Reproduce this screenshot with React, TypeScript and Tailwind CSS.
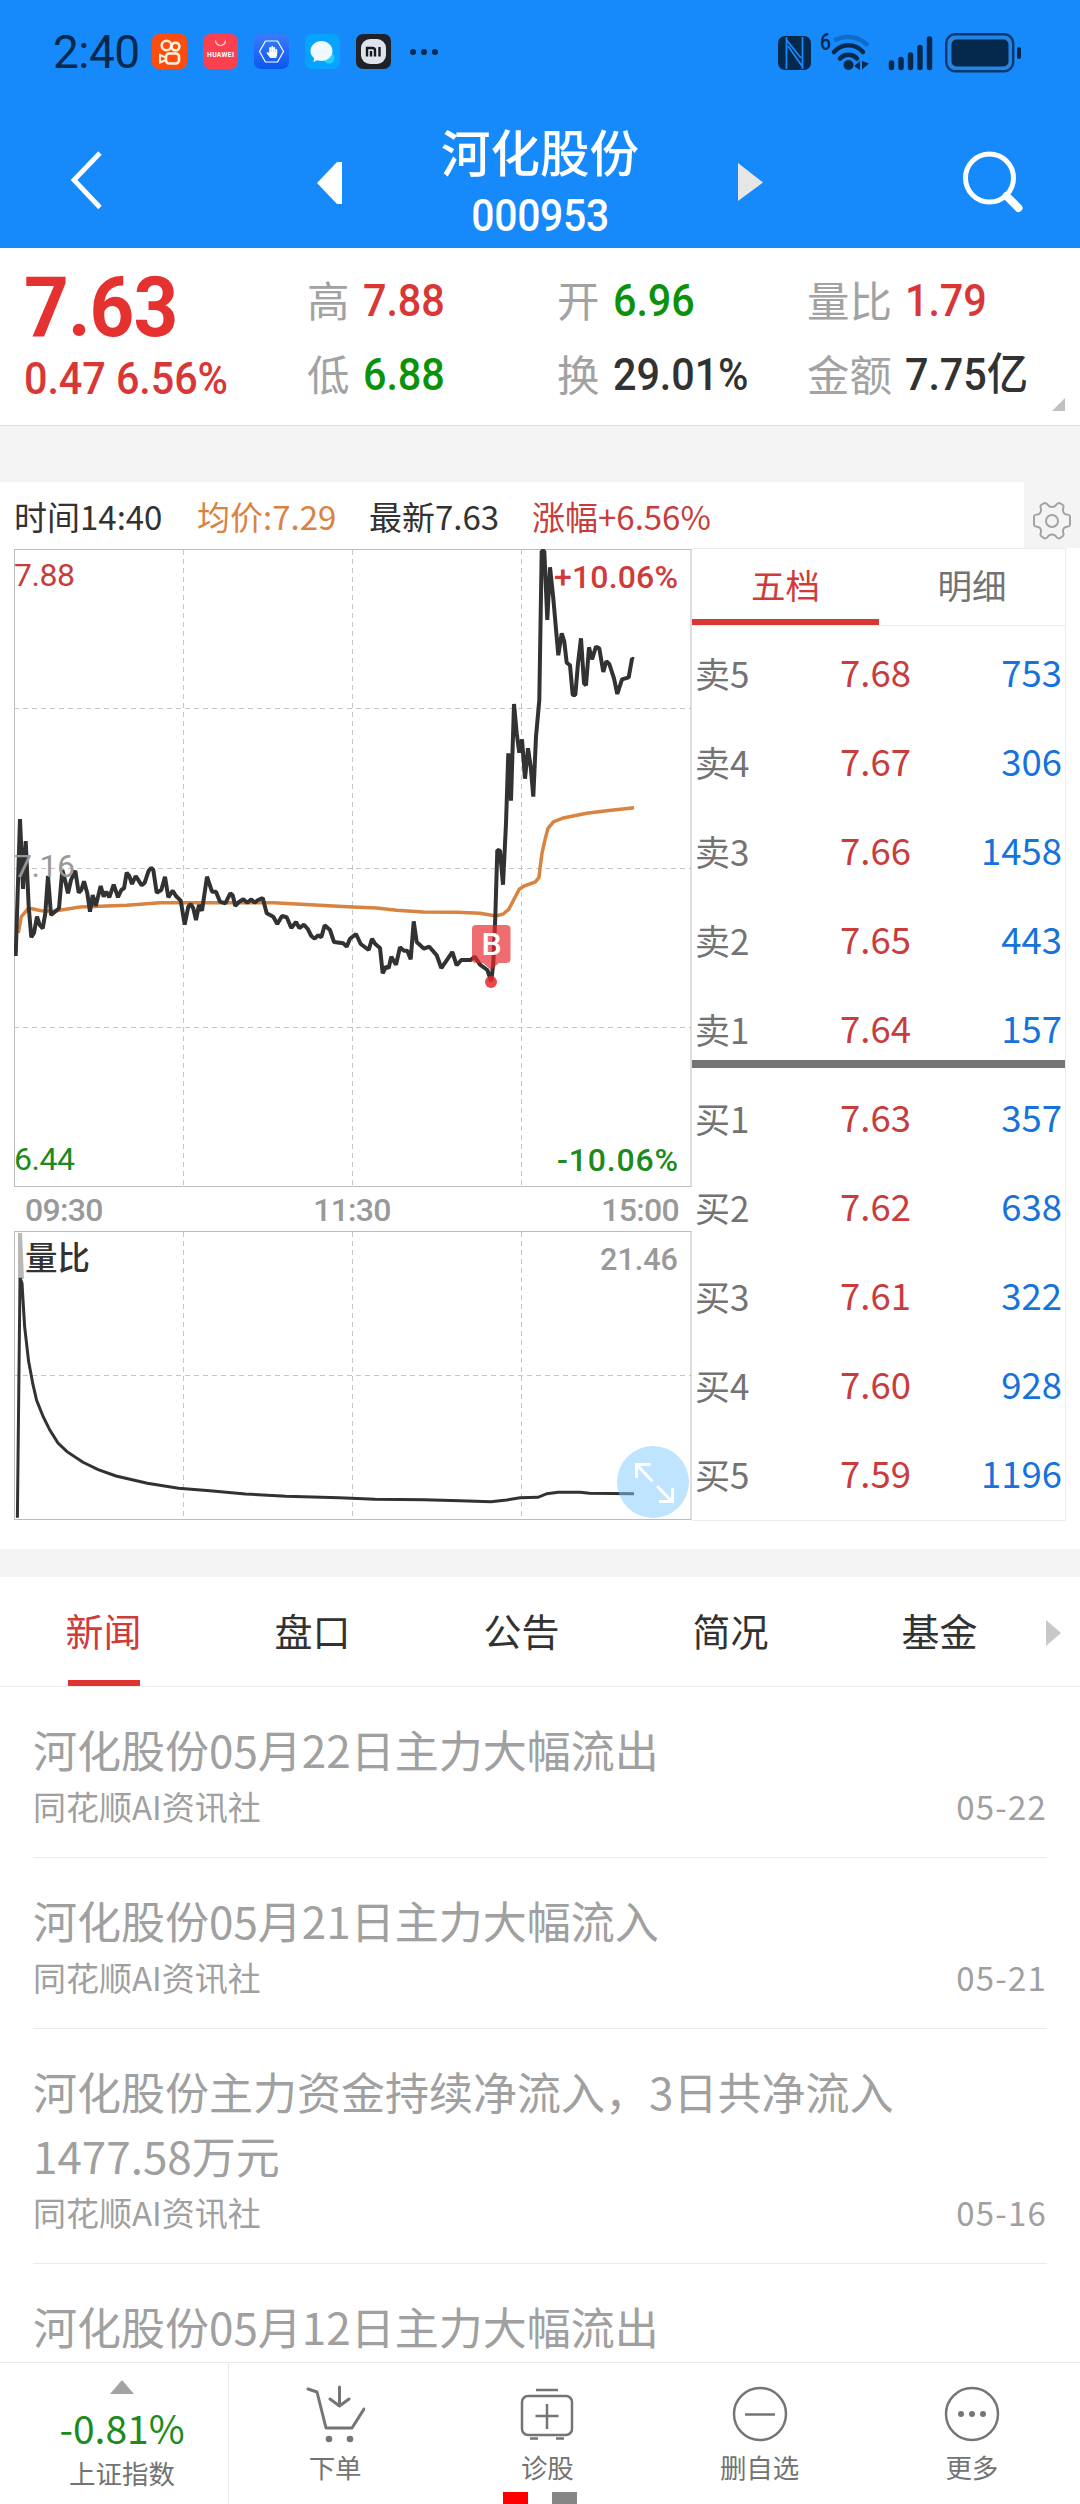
import { FaHandPaper } from "react-icons/fa";

const quotes = [
  [
    { label: "高", value: "7.88", color: "text-[#d93636]" },
    { label: "低", value: "6.88", color: "text-[#0a930a]" },
  ],
  [
    { label: "开", value: "6.96", color: "text-[#0a930a]" },
    { label: "换", value: "29.01%", color: "text-[#323232]" },
  ],
  [
    { label: "量比", value: "1.79", color: "text-[#d93636]" },
    { label: "金额", value: "7.75亿", color: "text-[#323232]" },
  ],
];

const asks = [
  { label: "卖5", price: "7.68", volume: "753" },
  { label: "卖4", price: "7.67", volume: "306" },
  { label: "卖3", price: "7.66", volume: "1458" },
  { label: "卖2", price: "7.65", volume: "443" },
  { label: "卖1", price: "7.64", volume: "157" },
];

const bids = [
  { label: "买1", price: "7.63", volume: "357" },
  { label: "买2", price: "7.62", volume: "638" },
  { label: "买3", price: "7.61", volume: "322" },
  { label: "买4", price: "7.60", volume: "928" },
  { label: "买5", price: "7.59", volume: "1196" },
];

const tabs = ["新闻", "盘口", "公告", "简况", "基金"];

const news = [
  {
    title: "河化股份05月22日主力大幅流出",
    source: "同花顺AI资讯社",
    date: "05-22",
  },
  {
    title: "河化股份05月21日主力大幅流入",
    source: "同花顺AI资讯社",
    date: "05-21",
  },
  {
    title: "河化股份主力资金持续净流入，3日共净流入1477.58万元",
    source: "同花顺AI资讯社",
    date: "05-16",
  },
  { title: "河化股份05月12日主力大幅流出" },
];

const pricePoints =
  "1.7,407 6,270 9,340 11.7,292 14.7,357.7 17.3,388.3 20,384 23,367.7 25.7,376 28.7,379.3 31.3,364.3 34,327 37,366 41,362.7 45,359.3 48.3,321 51,331 54,344.3 57,331 61.3,321.7 64.7,343.7 67.3,341 70,332.3 73.3,344.3 76,362.7 78.7,346 81.7,357 86.7,337 89.7,347.7 92.3,342.7 95.3,348.3 99.7,335.7 104,348.3 107.3,341 110,339.3 112.7,323.7 115.3,327 118,335 121.7,327 124.7,331.7 127.7,336.3 130.7,333.7 134.7,321.7 137.3,319 139.3,321 142.7,343.7 147.3,341 151,327.7 154.3,348.3 158.7,341.7 162,347 166.7,351.7 170.7,375.7 174.3,357.7 176.7,355 179.3,359.3 182,371 185,356 188,361.7 193,327.7 198,342.7 202,342.7 206,352.7 211.3,354.3 216.3,344.3 218.7,346.3 221.3,357 225.3,352.7 229.3,350.3 233.3,353.7 237.3,350.3 240.7,353.7 244,351 248.7,349 252.7,364.3 259.3,367.7 263.3,375 268,367 272.7,368.3 277.3,379 282,373 285.3,379 290,375.7 294,380.3 297.3,387 300.7,389.7 304,386.3 307.3,388.3 310.7,376.3 316,381 320,393 329.3,394.3 332.7,397.7 336,389.7 342,385 346.7,395 354.7,401 358,389.7 361.3,395 366,399 368.7,424.3 372,417.7 374.7,419 377.3,407.7 382,415.7 386,398.3 390,401.7 393.3,401.7 396.7,410.3 399.7,372.3 402.7,393 410,399.7 415.3,397.7 422.7,406.3 427.3,419 432,412.3 438.3,403 442.7,416.3 447.3,411 456.7,411 460.7,407.7 466,415.7 473.3,421 477.3,432.3 479.3,414.3 481.3,367.7 483.3,301 486,301.7 489,335.7 492,274.3 494.3,204.3 497,251.7 500,155 502.7,184.3 505.3,203.7 508,190.3 511,229.7 514,199.3 516.7,217.7 519.3,247.7 522,187.7 525.3,151 527.7,2 530.3,2 533.3,71 536,18.3 539.3,49.3 544.3,106.3 547.7,84.3 550.3,92.7 552.7,113.7 556,116.3 558.7,146 561.3,146 564,114.3 567,89.3 570,134.3 572,136.3 575,98.3 578,110.3 582,97.7 585.3,99.3 589.3,123 592.3,112.3 595.3,115 600,129.3 603.3,145 608,130.3 614.7,128.3 618,109.7 620,110.3";

const averagePoints =
  "4.3,384 7.3,367.7 14.7,359 27.3,361.7 39.3,362.3 66,358 112.7,356.3 146,353.7 259.3,353.7 319.3,357 338.7,358 362.7,359 382.7,361.3 409.3,363 442.7,363.3 466,364.3 482,367 489.3,365 494.7,360.3 500,350.3 505.3,340.3 510,337 521.3,333 525,328.3 526,319.3 528,304.3 531.3,289.3 534,279.3 539.3,273 549.3,269 572.7,264.3 592.7,261.7 620,258.7";

const volumePoints =
  "3.4,286.7 6,47 8,52 10.6,95.3 14.6,130.3 19,153.7 22.6,169.3 29.3,186 36,199.3 44,212 53,220.7 69,231.3 84.2,238.7 102,245 133.3,252.3 164.6,257.3 195.8,259.7 231.5,263 271.7,265.3 325.3,266.7 361,268.3 410,268.7 445.8,269.7 477,270.7 492.7,269 506,266.7 524,266.3 532.9,262.7 544,261.3 566.4,261.3 575.3,262.3 620,262.7";

function StatusBar() {
  return (
    <div className="flex h-[103px] items-center justify-between pl-[53px] pr-[59px]">
      <div className="flex items-center text-[#04294d]">
        <span className="w-[99px] font-[Roboto] text-[46px] leading-none tracking-[-0.5px]">
          2:40
        </span>
        <div className="flex items-center gap-4">
          <svg width="35" height="35" viewBox="0 0 35 35">
            <rect width="35" height="35" rx="7" fill="#fc4c0e" />
            <g fill="none" stroke="#fff1dc" strokeWidth="2.6">
              <circle cx="14.5" cy="11.5" r="4.8" />
              <circle cx="23.5" cy="12.5" r="3.9" />
              <rect x="14" y="19.5" width="13" height="10" rx="3.2" />
              <path d="M14 23.5l-6-2.5v7.5l6-2.5z" strokeWidth="2" />
            </g>
          </svg>
          <svg width="35" height="35" viewBox="0 0 35 35">
            <rect width="35" height="35" rx="7" fill="#fb4150" />
            <path
              d="M12.5 6.5a5 5 0 0 0 10 0"
              fill="none"
              stroke="#ffd9dc"
              strokeWidth="1.2"
            />
            <text
              x="17.5"
              y="23.2"
              textAnchor="middle"
              textLength="27"
              fontSize="6.8"
              fontWeight="700"
              fill="#fff"
              fontFamily="Roboto, sans-serif"
            >
              HUAWEI
            </text>
          </svg>
          <span className="relative flex size-[35px] items-center justify-center rounded-[7px] bg-linear-to-b from-[#3a7bff] to-[#0757ee]">
            <svg
              width="35"
              height="35"
              viewBox="0 0 35 35"
              className="absolute inset-0"
            >
              <path
                d="M11.5 7h12l6 10.5-6 10.5h-12l-6-10.5z"
                fill="none"
                stroke="#fff"
                strokeWidth="1.2"
                strokeLinejoin="round"
              />
            </svg>
            <FaHandPaper className="relative size-[12px] text-white" />
          </span>
          <svg width="35" height="35" viewBox="0 0 35 35">
            <rect width="35" height="35" rx="7" fill="#06a3ff" />
            <circle cx="24" cy="24" r="5.5" fill="#25cdfb" />
            <path
              d="M16.5 7c6 0 11 4.5 11 10s-5 10-11 10c-1.500 0-3-.2-4.200-.7L8.500 28l.5-4C6.800 22.300 5.500 20 5.500 17c0-5.500 5-10 11-10z"
              fill="#eff9ff"
            />
          </svg>
          <svg width="35" height="35" viewBox="0 0 35 35">
            <rect width="35" height="35" rx="7" fill="#1f2329" />
            <rect x="5" y="5" width="25" height="25" rx="9" fill="#dfe3ee" />
            <path
              d="M11 22.5v-8.500h5.500a2.500 2.500 0 0 1 2.500 2.500v6M15 17v5.500M23.500 13v9.500"
              fill="none"
              stroke="#15181d"
              strokeWidth="2.4"
            />
          </svg>
        </div>
        <div className="ml-[19px] flex gap-[5px]">
          <i className="size-[6px] rounded-full bg-[#04294d]" />
          <i className="size-[6px] rounded-full bg-[#04294d]" />
          <i className="size-[6px] rounded-full bg-[#04294d]" />
        </div>
      </div>
      <svg width="243" height="52" viewBox="0 -6 243 52">
        <rect x="0" y="4" width="33" height="34" rx="7" fill="#04294d" />
        <path
          d="M8.500 5v32M8.500 8l14.500 18M10 14l14 20M24.500 37V5"
          fill="none"
          stroke="#178afb"
          strokeWidth="1.8"
        />
        <text
          x="42"
          y="18"
          fontSize="23"
          fontWeight="500"
          textLength="11"
          lengthAdjust="spacingAndGlyphs"
          fill="#04294d"
          fontFamily="Roboto, sans-serif"
        >
          6
        </text>
        <g fill="none" strokeLinecap="round">
          <path
            d="M56 8.500c11-6 25-4.500 34 5"
            stroke="#0f6dca"
            strokeWidth="4.5"
            strokeLinecap="butt"
          />
          <path
            d="M56 20c8-9 21-9 29 0M62 26.500c4.500-5 12.500-5 17 0"
            stroke="#04294d"
            strokeWidth="4.5"
          />
        </g>
        <circle cx="70.5" cy="33" r="5" fill="#04294d" />
        <path d="M76 34l6-5v9zM84 29l7 2.500-7 6z" fill="#04294d" />
        <path
          d="M113.500 31v4.500M123 27.500v8M132.500 23v12.500M142 15.500v20M151.500 7v28.500"
          stroke="#04294d"
          strokeWidth="5.5"
          strokeLinecap="round"
        />
        <rect
          x="168.2"
          y="2.2"
          width="67"
          height="37"
          rx="9"
          fill="#2485e4"
          stroke="#04396f"
          strokeWidth="2.4"
        />
        <rect x="173.5" y="7.5" width="57" height="27" rx="5" fill="#04294d" />
        <rect x="239" y="15" width="4" height="12" rx="2" fill="#04294d" />
      </svg>
    </div>
  );
}

function TitleBar() {
  return (
    <div className="flex h-[145px] items-start justify-between pl-[70px] pr-[56px] text-white">
      <svg width="47" height="60" viewBox="0 0 47 60" className="mt-[47px]">
        <path
          d="M30 3L4 30 30 57.500"
          fill="none"
          stroke="#fff"
          strokeWidth="4.8"
        />
      </svg>
      <div className="flex w-[446px] items-start justify-between">
        <svg width="25" height="42" className="mt-[59px]">
          <path d="M0 21L20 0h5v42h-5z" fill="#fff" />
        </svg>
        <div className="flex flex-col items-center">
          <div className="mt-[16px] text-[49.5px] font-medium leading-[64px]">
            河化股份
          </div>
          <div className="mt-[9px] scale-x-[0.93] font-[Roboto] text-[44px] font-medium leading-[48px] tracking-[-0.3px]">
            000953
          </div>
        </div>
        <svg width="25" height="40" className="mt-[59px]">
          <path d="M0 1l25 19.500L0 39z" fill="#e6e6e6" />
        </svg>
      </div>
      <svg width="61" height="62" viewBox="0 0 61 62" className="mt-[48px]">
        <circle
          cx="26.5"
          cy="27"
          r="24"
          fill="none"
          stroke="#fff"
          strokeWidth="5"
        />
        <path
          d="M43.500 45l12 12"
          stroke="#fff"
          strokeWidth="8"
          strokeLinecap="round"
        />
      </svg>
    </div>
  );
}

function QuotePanel() {
  return (
    <section className="relative flex h-[178px] border-b border-[#dedede] bg-white">
      <div className="w-[307px] pl-6 font-[Roboto] text-[#e5312f]">
        <div className="w-fit origin-left scale-x-[0.93] pt-[22px] text-[84px] font-bold leading-[76px] tracking-[-1px]">
          7.63
        </div>
        <div className="mt-px w-fit origin-left scale-x-[0.93] whitespace-nowrap text-[44.5px] font-medium leading-[64px] tracking-[-0.1px] text-[#d93636]">
          0.47 6.56%
        </div>
      </div>
      <div className="flex flex-1">
        {quotes.map((column) => (
          <div key={column[0].label} className="w-[250px] shrink-0 pt-[16px]">
            {column.map((item) => (
              <div
                key={item.label}
                className="flex h-[74px] items-center gap-[13px] whitespace-nowrap text-[42.5px] leading-none"
              >
                <span className="-mt-1 text-[#a2a2a2]">{item.label}</span>
                <span
                  className={`origin-left scale-x-[0.93] font-[Roboto,'Noto_Sans_CJK_SC'] text-[44.5px] font-medium tracking-[-0.1px] ${item.color}`}
                >
                  {item.value}
                </span>
              </div>
            ))}
          </div>
        ))}
      </div>
      <svg
        width="13"
        height="13"
        className="absolute bottom-[14px] right-[15px]"
      >
        <path d="M13 0v13H0z" fill="#c0c0c0" />
      </svg>
    </section>
  );
}

function InfoRow() {
  return (
    <div className="flex h-[66px]">
      <div className="flex w-[1024px] items-center bg-white pl-[14px] pt-[3px] text-[33px] leading-none text-[#323232]">
        <span className="w-[183px]">时间14:40</span>
        <span className="w-[172px] text-[#d98341]">均价:7.29</span>
        <span className="w-[163px]">最新7.63</span>
        <span className="text-[#c83c3c]">涨幅+6.56%</span>
      </div>
      <div className="flex flex-1 items-center justify-center">
        <svg
          width="40"
          height="40"
          viewBox="0 0 40 40"
          fill="none"
          stroke="#a3a3a3"
          strokeWidth="2"
          strokeLinejoin="round"
          className="mt-[11px]"
        >
          <path d="M12.500 2q2 0 3 1.500Q17 6 20 6t4.500-2.500Q25.500 2 27.500 2l3.500 2q1 1.500 0 4-.5 5 4 5.500 2.500.2 3 1.500v9q-.5 1.500-3 1.700-4.500.6-4 5.300 1 2.500 0 4l-3.500 2.500q-2 0-3-1.500Q23 33.500 20 33.500T15.500 36q-1 1.500-3 1.500L9 35q-1-1.500 0-4 .5-4.700-4-5.300Q2.500 25.500 2 24v-9q.5-1.300 3-1.500Q9.500 13 9 8q-1-2.500 0-4z" />
          <circle cx="20" cy="20" r="6" />
        </svg>
      </div>
    </div>
  );
}

function PriceChart() {
  return (
    <svg
      width="678"
      height="638"
      viewBox="0 0 678 638"
      fontSize="32"
      className="block font-[Roboto]"
    >
      <rect
        x="0.5"
        y="0.5"
        width="676.5"
        height="637"
        fill="none"
        stroke="#bdbdbd"
      />
      <g stroke="#c6c6c6" strokeDasharray="5 4">
        <path d="M169.500 1v637M338.500 1v637M507.500 1v637" />
        <path d="M0 159.500h677M0 319.500h677M0 478.500h677" />
      </g>
      <polyline
        points={averagePoints}
        fill="none"
        stroke="#d98341"
        strokeWidth="3.5"
      />
      <polyline
        points={pricePoints}
        fill="none"
        stroke="#323232"
        strokeWidth="4"
        strokeLinejoin="bevel"
      />
      <g letterSpacing="-0.5">
        <text x="0" y="37" fill="#c83c3c">
          7.88
        </text>
        <text x="0" y="328" fill="#999">
          7.16
        </text>
        <text x="0" y="621" fill="#1c8a1c">
          6.44
        </text>
      </g>
      <g fontWeight="500">
        <text x="540" y="39" fill="#d03a3a" textLength="124">
          +10.06%
        </text>
        <text x="543" y="622" fill="#1c8a1c" textLength="121">
          -10.06%
        </text>
      </g>
      <g fill="#e8282d" fillOpacity="0.68">
        <path d="M462 376h30.500a4 4 0 0 1 4 4v30a4 4 0 0 1-4 4H485l-8 7-8-7h-7a4 4 0 0 1-4-4v-30a4 4 0 0 1 4-4z" />
        <circle cx="477" cy="433" r="6" fillOpacity="0.85" />
      </g>
      <text
        x="477.5"
        y="406"
        fill="#fff"
        fontSize="32"
        fontWeight="500"
        textAnchor="middle"
      >
        B
      </text>
    </svg>
  );
}

function VolumeRatioChart() {
  return (
    <svg
      width="678"
      height="289"
      viewBox="0 0 678 289"
      className="block font-[Roboto]"
    >
      <rect
        x="0.5"
        y="0.5"
        width="676.5"
        height="288"
        fill="none"
        stroke="#bdbdbd"
      />
      <path
        d="M169.500 1v287M338.500 1v287M507.500 1v287M0 144.500h677"
        stroke="#c6c6c6"
        strokeDasharray="5 4"
      />
      <path d="M4 48V2h4l2 46z" fill="#b8b8b8" />
      <polyline
        points={volumePoints}
        fill="none"
        stroke="#323232"
        strokeWidth="3"
      />
      <text
        x="11"
        y="38.5"
        fill="#323232"
        fontSize="32.5"
        fontWeight="500"
        fontFamily="'Noto Sans CJK SC', sans-serif"
      >
        量比
      </text>
      <text
        x="586"
        y="39"
        fill="#999"
        fontSize="32"
        fontWeight="500"
        textLength="78"
        lengthAdjust="spacingAndGlyphs"
      >
        21.46
      </text>
      <circle cx="639" cy="251" r="36" fill="#80caff" fillOpacity="0.5" />
      <path
        d="M622.500 247v-13.500h14M623.500 234.500l15 16M643 255l15 15.500M645 270.500h13.500V257"
        fill="none"
        stroke="#fff"
        strokeWidth="3"
      />
    </svg>
  );
}

function OrderRow({
  label,
  price,
  volume,
}: {
  label: string;
  price: string;
  volume: string;
}) {
  return (
    <div className="flex h-[89px] items-center pl-[3px] pr-[3px] pt-[3px] text-[36.5px] leading-none">
      <span className="w-[145px] text-[35px] text-[#737373]">{label}</span>
      <span className="text-[#c83c3c]">{price}</span>
      <span className="ml-auto text-[#1673dc]">{volume}</span>
    </div>
  );
}

function OrderBook() {
  return (
    <div className="ml-px h-[973px] w-[374px] border-y border-r border-[#ebebeb]">
      <div className="flex h-[77px] border-b border-[#ebebeb] text-[34.5px] leading-none">
        <div className="flex w-[187px] items-center justify-center border-b-[6px] border-[#d93636] text-[#d03a3a]">
          五档
        </div>
        <div className="flex flex-1 items-center justify-center border-b-[6px] border-transparent text-[#737373]">
          明细
        </div>
      </div>
      {asks.map((row) => (
        <OrderRow key={row.label} {...row} />
      ))}
      <div className="-mt-[11px] h-[8px] bg-[#757575]" />
      <div className="pt-[3px]">
        {bids.map((row) => (
          <OrderRow key={row.label} {...row} />
        ))}
      </div>
    </div>
  );
}

function NewsSection() {
  return (
    <section className="h-[785px] overflow-hidden bg-white">
      <div className="relative -ml-px flex h-[110px] border-b border-[#ebebeb] text-[38px] text-[#323232]">
        {tabs.map((tab, index) => (
          <div
            key={tab}
            className="flex w-[209px] flex-col items-center justify-between"
          >
            <span
              className={`pt-[26px] leading-[54px] ${index === 0 ? "text-[#d03a3a]" : ""}`}
            >
              {tab}
            </span>
            {index === 0 && <i className="h-[6px] w-[72px] bg-[#e0322f]" />}
          </div>
        ))}
        <svg
          width="15"
          height="26"
          className="absolute right-[19px] top-[43px]"
        >
          <path d="M0 0l15 13L0 26z" fill="#c8c8c8" />
        </svg>
      </div>
      <div className="pl-[33px] pr-[33px] text-[#a0a0a0]">
        {news.map((item) => (
          <article
            key={item.title}
            className="border-b border-[#ebebeb] pb-[26px] pt-[30px]"
          >
            <h3 className="w-[920px] text-[44px] leading-[64px]">
              {item.title}
            </h3>
            {item.source && (
              <div className="flex justify-between text-[33px] leading-[50px]">
                <span>{item.source}</span>
                <span className="tracking-[1.2px]">{item.date}</span>
              </div>
            )}
          </article>
        ))}
      </div>
    </section>
  );
}

function BottomBar() {
  return (
    <nav className="relative flex h-[142px] border-t border-[#ebebeb] bg-white text-[26.5px] text-[#737373]">
      <div className="flex w-[229px] flex-col items-center border-r border-[#ebebeb] pl-4">
        <svg width="24" height="14" className="mt-[17px]">
          <path d="M12 0l12 14H0z" fill="#a3a3a3" />
        </svg>
        <span className="mt-[8px] text-[39px] leading-[50px] text-[#1c8a1c]">
          -0.81%
        </span>
        <span className="mt-px leading-[40px]">上证指数</span>
      </div>
      <div className="flex flex-1 fill-none stroke-[#757575] pr-[2px] text-center leading-[40px]">
        <div className="flex flex-1 flex-col items-center pt-[22px]">
          <svg width="60" height="60" viewBox="0 0 60 60" strokeWidth="3">
            <path
              d="M3 4l9 3 9 36h26l12-19M34.500 2v18M25 14l9.500 7 9.500-7"
              strokeLinecap="round"
              strokeLinejoin="round"
            />
            <circle cx="24" cy="54" r="3.3" fill="#757575" stroke="none" />
            <circle cx="45" cy="54" r="3.3" fill="#757575" stroke="none" />
          </svg>
          <span className="mt-[2px]">下单</span>
        </div>
        <div className="flex flex-1 flex-col items-center pt-[22px]">
          <svg width="60" height="60" viewBox="0 0 60 60" strokeWidth="2.5">
            <rect x="5" y="11" width="50" height="39" rx="6" />
            <path d="M19 5h22M30 19v25M18.500 31h23M13 53.500h8M39 53.500h8" />
          </svg>
          <span className="mt-[2px]">诊股</span>
        </div>
        <div className="flex flex-1 flex-col items-center pt-[22px]">
          <svg width="60" height="60" viewBox="0 0 60 60" strokeWidth="2.5">
            <circle cx="30" cy="29" r="26" />
            <path d="M15 29.500h30" />
          </svg>
          <span className="mt-[2px]">删自选</span>
        </div>
        <div className="flex flex-1 flex-col items-center pt-[22px]">
          <svg width="60" height="60" viewBox="0 0 60 60" strokeWidth="2.5">
            <circle cx="30" cy="29" r="26" />
            <g fill="#757575" stroke="none">
              <circle cx="19" cy="29" r="3" />
              <circle cx="30" cy="29" r="3" />
              <circle cx="41" cy="29" r="3" />
            </g>
          </svg>
          <span className="mt-[2px]">更多</span>
        </div>
      </div>
      <div className="absolute bottom-0 left-[503px] flex gap-6">
        <i className="h-[12px] w-[25px] bg-[#fe0000]" />
        <i className="h-[12px] w-[25px] bg-[#868686]" />
      </div>
    </nav>
  );
}

export default function App() {
  return (
    <div className="h-[2504px] w-[1080px] overflow-hidden bg-[#f4f4f4] font-['Noto_Sans_CJK_SC',sans-serif]">
      <header className="bg-[#178afb]">
        <StatusBar />
        <TitleBar />
      </header>
      <QuotePanel />
      <div className="h-[56px]" />
      <InfoRow />
      <section className="flex h-[1001px] bg-white pl-[14px]">
        <div className="mt-px w-[677px]">
          <PriceChart />
          <div className="flex h-[44px] items-center justify-between pl-[11px] pr-[12px] pt-px font-[Roboto] text-[32px] font-medium leading-none tracking-[-0.7px] text-[#999]">
            <span>09:30</span>
            <span>11:30</span>
            <span>15:00</span>
          </div>
          <VolumeRatioChart />
        </div>
        <OrderBook />
      </section>
      <div className="h-[28px]" />
      <NewsSection />
      <BottomBar />
    </div>
  );
}
